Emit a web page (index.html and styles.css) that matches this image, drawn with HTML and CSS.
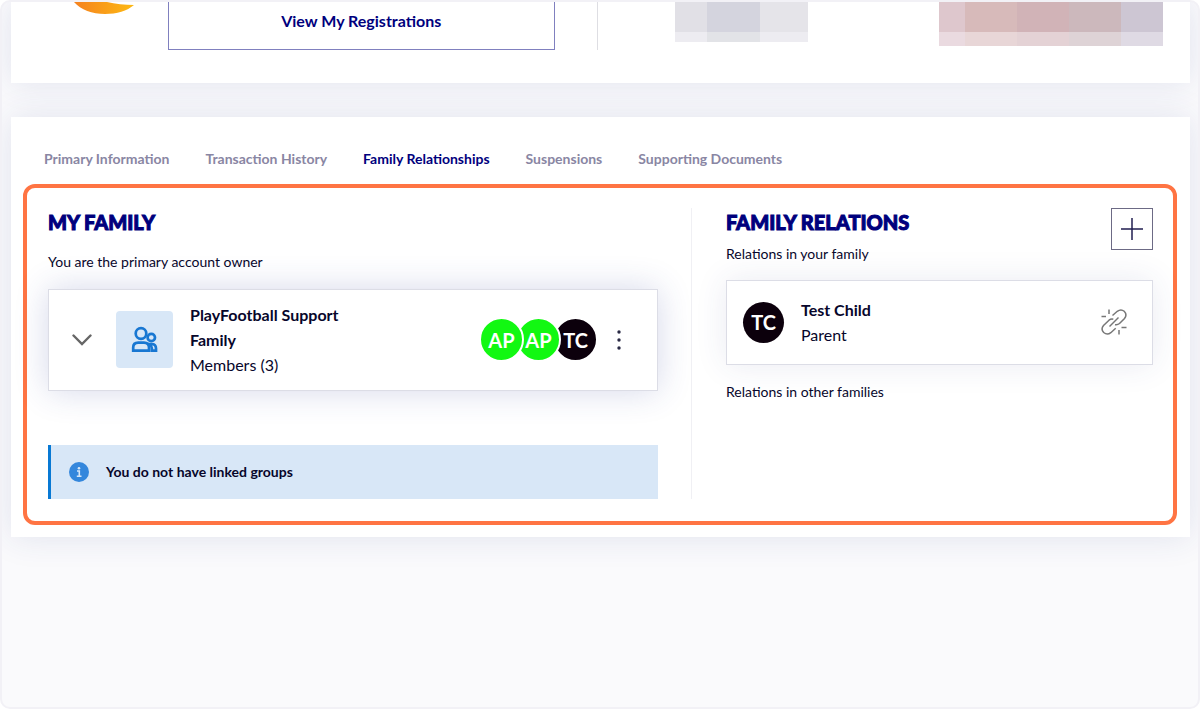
FILE: index.html
```html
<!DOCTYPE html>
<html lang="en">
<head>
<meta charset="utf-8">
<meta name="viewport" content="width=device-width, initial-scale=1">
<title>Family Relationships</title>
<link rel="stylesheet" href="styles.css">
</head>
<body>
<div class="frame">
  <header class="card summary">
    <svg class="logo" viewBox="0 0 62 13" width="62" height="13" aria-hidden="true">
      <defs><linearGradient id="sun"><stop offset="0" stop-color="#f58220"/><stop offset="1" stop-color="#fdb913"/></linearGradient></defs>
      <path d="M1 0C8 8 19 12 32 12C44 12 54 9 61 3C52 3 42 2 34 0Z" fill="url(#sun)"/>
    </svg>
    <button class="registrations" type="button">View My Registrations</button>
    <span class="summary-rule"></span>
    <div class="redacted redacted-grey" aria-hidden="true"><i></i><i></i><i></i><i></i><i></i><i></i></div>
    <div class="redacted redacted-pink" aria-hidden="true"><i></i><i></i><i></i><i></i><i></i><i></i><i></i><i></i><i></i><i></i></div>
  </header>

  <main class="card account">
    <nav class="tabs">
      <a href="#primary">Primary Information</a>
      <a href="#transactions">Transaction History</a>
      <a href="#family" class="active" aria-current="page">Family Relationships</a>
      <a href="#suspensions">Suspensions</a>
      <a href="#documents">Supporting Documents</a>
    </nav>

    <div class="highlight" id="family">
      <section class="my-family">
        <h2>My Family</h2>
        <p class="note owner-note">You are the primary account owner</p>
        <article class="panel family-panel">
          <button class="icon-button" type="button" aria-label="Expand family">
            <svg width="20" height="12" viewBox="0 0 20 12" fill="none" stroke="#666" stroke-width="2.4" stroke-linecap="round"><path d="M1.5 1.5L10 10L18.500 1.500"/></svg>
          </button>
          <span class="family-icon">
            <svg width="27" height="27" viewBox="0 0 27 27" fill="none" stroke="#1877d2" stroke-width="2.700">
              <circle cx="10" cy="7.500" r="5.300"/>
              <path d="M2.200 24.700V21.500Q2.200 16.600 7.200 16.600H13Q18 16.600 18 21.500V24.700Z"/>
              <circle cx="20.300" cy="11.500" r="3.700"/>
              <path d="M18.500 18H20.500Q25 18 25 22.500V24.700H20.800V22Q20.800 19.800 18.500 18Z"/>
            </svg>
          </span>
          <div class="details family-name">
            <h3>PlayFootball Support Family</h3>
            <p>Members (3)</p>
          </div>
          <div class="avatars">
            <span class="avatar green">AP</span>
            <span class="avatar green">AP</span>
            <span class="avatar">TC</span>
          </div>
          <button class="icon-button" type="button" aria-label="Family options">
            <svg width="6" height="22" viewBox="0 0 6 22" fill="#292944"><circle cx="3" cy="3" r="1.700"/><circle cx="3" cy="11" r="1.700"/><circle cx="3" cy="19" r="1.700"/></svg>
          </button>
        </article>
        <div class="alert" role="status">
          <svg width="20" height="20" viewBox="0 0 20 20" aria-hidden="true"><circle cx="10" cy="10" r="10" fill="#3487dc"/><circle cx="10" cy="6.200" r="1.300" fill="#d8e7f7"/><path d="M8 9H10.300V14.300M7.800 14.300H12.500" fill="none" stroke="#d8e7f7" stroke-width="1.600"/></svg>
          <p>You do not have linked groups</p>
        </div>
      </section>

      <section class="relations">
        <div class="relations-head">
          <div>
            <h2>Family Relations</h2>
            <p class="note">Relations in your family</p>
          </div>
          <button class="add" type="button" aria-label="Add relation">
            <svg width="22" height="22" viewBox="0 0 22 22" stroke="#201e50" stroke-width="1.500"><path d="M11 0V22M0 11H22"/></svg>
          </button>
        </div>
        <article class="panel relation-panel">
          <span class="avatar">TC</span>
          <div class="details">
            <h3>Test Child</h3>
            <p>Parent</p>
          </div>
          <button class="icon-button unlink" type="button" aria-label="Unlink Test Child">
            <svg width="26" height="26" viewBox="0 0 26 26" fill="none" stroke="#777" stroke-width="1.500">
              <path d="M8 0.500V5M0.500 7.500H5M20.500 18.500H25.500M18 21V25.500"/>
              <path d="M11.500 6.500L16.300 2.300Q20 -0.500 23.200 2.300Q26.500 5.800 23.500 9.500L18.500 14.500Q16.500 16.200 14 15.700"/>
              <path d="M14.700 19.200L9.800 23.700Q6.200 26.500 2.700 23.500Q-0.500 20 2.500 16.500L8 11.200Q10 9.600 12.300 10.200"/>
              <path d="M8.500 17.500L17.500 8.500"/>
            </svg>
          </button>
        </article>
        <p class="note">Relations in other families</p>
      </section>
    </div>
  </main>
</div>
</body>
</html>
```
FILE: styles.css
```css
* { box-sizing: border-box; }

body {
  margin: 0;
  background: #fff;
  color: #07062b;
  font-family: Lato, "Open Sans", sans-serif;
  font-size: 14px;
}

h2, h3, p { margin: 0; }
button { font: inherit; color: inherit; padding: 0; cursor: pointer; }
svg { display: block; }

.frame {
  display: flex;
  flex-direction: column;
  gap: 34px;
  min-height: 100vh;
  padding: 0 8px 0 9px;
  border: 2px solid #f2f1f6;
  border-radius: 10px;
  background: #fafafc;
  overflow: hidden;
}

.card {
  background: #fff;
  box-shadow: 0 0 32px rgba(45, 60, 130, 0.12);
}

/* Summary */
.summary {
  display: grid;
  grid-template-columns: 95fr 387fr 42fr 79fr 133fr 131fr 224fr;
  align-items: start;
  padding: 0 27px 33px 62px;
}

.registrations {
  grid-column: 2;
  height: 48px;
  padding-bottom: 10px;
  border: 1px solid #8080bf;
  border-top: 0 solid #8080bf;
  background: #fff;
  color: #00007d;
  font-size: 16px;
  font-weight: 700;
}

.summary-rule {
  grid-column: 4;
  width: 1px;
  height: 48px;
  background: #dedee3;
}

.redacted { display: grid; }
.redacted-grey {
  grid-column: 5;
  grid-template: 30px 10px / 32fr 53fr 48fr;
}
.redacted-pink {
  grid-column: 7;
  grid-template: 30px 14px / 26fr 52fr 52fr 52fr 42fr;
}
.redacted-grey i:nth-child(1) { background: #e1e0e6; }
.redacted-grey i:nth-child(2) { background: #d4d4de; }
.redacted-grey i:nth-child(3) { background: #e5e4e9; }
.redacted-grey i:nth-child(4) { background: #edecf1; }
.redacted-grey i:nth-child(5) { background: #e2e3e7; }
.redacted-grey i:nth-child(6) { background: #edecf1; }
.redacted-pink i:nth-child(1) { background: #dec7cd; }
.redacted-pink i:nth-child(2) { background: #d7baba; }
.redacted-pink i:nth-child(3) { background: #d1b3b7; }
.redacted-pink i:nth-child(4) { background: #ccb8bc; }
.redacted-pink i:nth-child(5) { background: #cdc6d3; }
.redacted-pink i:nth-child(6) { background: #eadae0; }
.redacted-pink i:nth-child(7) { background: #e8d6d7; }
.redacted-pink i:nth-child(8) { background: #e4d2d5; }
.redacted-pink i:nth-child(9) { background: #ded3d6; }
.redacted-pink i:nth-child(10) { background: #dfdae4; }

/* Tabs */
.account { padding: 32px 13px 12px 12px; }

.tabs {
  display: flex;
  flex-wrap: wrap;
  gap: 36px;
  padding: 0 21px 15px;
  line-height: 20px;
}
.tabs a {
  color: #8986a3;
  font-weight: 700;
  text-decoration: none;
}
.tabs .active { color: #00007d; }

/* Family area */
.highlight {
  display: grid;
  grid-template-columns: minmax(0, 610fr) minmax(0, 462fr);
  gap: 33px;
  padding: 20px 20px 22px 21px;
  border: 4px solid #ff7443;
  border-radius: 12px;
}

h2 {
  color: #00007d;
  font-family: "Lato Black", Lato, sans-serif;
  font-size: 20px;
  font-weight: 900;
  line-height: 28px;
  text-transform: uppercase;
  -webkit-text-stroke: 1px #00007d;
}

.note { line-height: 20px; }
.owner-note { margin: 16px 0 17px; }

.panel {
  display: flex;
  align-items: center;
  border: 1px solid #dcdde6;
  background: #fff;
}

.family-panel {
  padding: 12px 35px 13px 23px;
  box-shadow: 0 0 32px rgba(45, 60, 150, 0.2);
}

.icon-button {
  border: 0;
  background: none;
}

.family-icon {
  display: grid;
  flex: none;
  place-items: center;
  width: 57px;
  height: 57px;
  margin: 0 17px 0 24px;
  border-radius: 4px;
  background: #d8e7f7;
}

.details { line-height: 25px; }
.details h3 {
  color: #07062b;
  font-size: 16px;
  font-weight: 700;
}
.details p { font-size: 16px; }
.family-name { flex: 0 1 180px; }

.avatars {
  display: flex;
  margin-left: auto;
  margin-right: 18px;
}
.avatars .avatar + .avatar { margin-left: -8px; }
.avatars .avatar {
  width: 45px;
  height: 45px;
  border: 2px solid #fff;
}
.avatars .avatar:nth-child(1) { z-index: 3; }
.avatars .avatar:nth-child(2) { z-index: 2; }

.avatar {
  display: grid;
  place-items: center;
  width: 41px;
  height: 41px;
  border-radius: 50%;
  background: #0c000c;
  color: #fff;
  font-size: 20px;
  font-weight: 700;
}
.avatar.green { background: #12f812; }

.alert {
  display: flex;
  align-items: center;
  gap: 17px;
  margin-top: 54px;
  padding: 17px 18px;
  border-left: 3px solid #0879d4;
  background: #d8e7f7;
  font-weight: 700;
  line-height: 20px;
}

/* Relations */
.relations {
  padding-left: 34px;
  border-left: 1px solid #f0f0f4;
}
.relations-head {
  display: flex;
  justify-content: space-between;
}
.relations-head .note { margin-top: 8px; }
.add {
  display: grid;
  place-items: center;
  width: 42px;
  height: 42px;
  border: 1px solid #6c6a85;
  background: #fff;
}
.relation-panel {
  gap: 17px;
  margin: 16px 0 17px;
  padding: 16px 25px 17px 16px;
  box-shadow: 0 0 32px rgba(45, 60, 130, 0.1);
}
.unlink { margin-left: auto; }
```
